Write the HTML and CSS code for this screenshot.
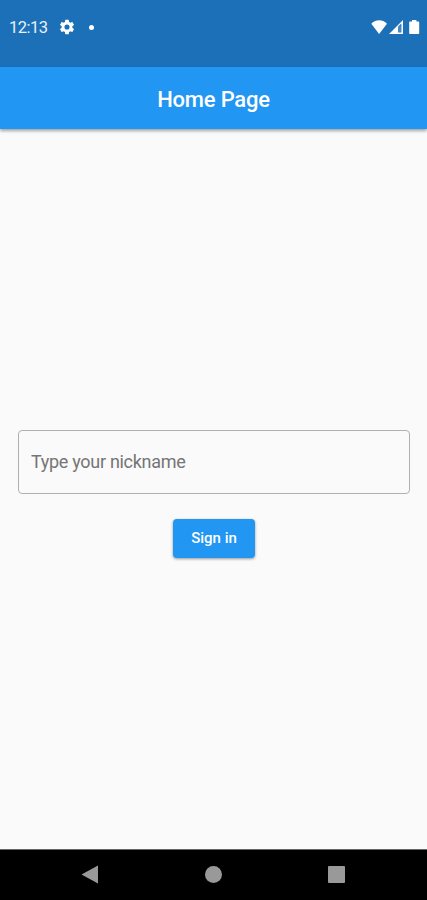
FILE: index.html
```html
<!DOCTYPE html>
<html lang="en">
<head>
    <meta charset="UTF-8">
    <meta name="viewport" content="width=device-width, initial-scale=1.0">
    <title>Home Page</title>
    <link rel="stylesheet" href="styles.css">
</head>
<body>
    <div class="status-bar">
        <span class="time">12:13</span>
        <svg class="gear" width="18" height="18" viewBox="0 0 24 24"><path fill="#fff" d="M19.14 12.94c.04-.3.06-.61.06-.94 0-.32-.02-.64-.07-.94l2.03-1.58a.49.49 0 0 0 .12-.61l-1.92-3.32a.49.49 0 0 0-.59-.22l-2.39.96c-.5-.38-1.03-.7-1.62-.94l-.36-2.54a.48.48 0 0 0-.48-.41h-3.84c-.24 0-.43.17-.47.41l-.36 2.54c-.59.24-1.13.57-1.62.94l-2.39-.96a.49.49 0 0 0-.59.22L2.74 8.87c-.12.21-.08.47.12.61l2.03 1.58c-.05.3-.09.63-.09.94s.02.64.07.94l-2.03 1.58a.49.49 0 0 0-.12.61l1.92 3.32c.12.22.37.29.59.22l2.39-.96c.5.38 1.03.7 1.62.94l.36 2.54c.05.24.24.41.48.41h3.84c.24 0 .44-.17.47-.41l.36-2.54c.59-.24 1.13-.56 1.62-.94l2.39.96c.22.08.47 0 .59-.22l1.92-3.32a.49.49 0 0 0-.12-.61l-2.01-1.58zM12 15.4A3.4 3.4 0 1 1 12 8.600a3.4 3.4 0 0 1 0 6.800z"/></svg>
        <span class="dot"></span>
        <svg class="signals" width="50" height="16" viewBox="0 0 50 16">
            <path fill="#fff" d="M1.300 4.700C5.700.1 12.600.1 17 4.700L9.100 15z"/>
            <path fill="#fff" fill-rule="evenodd" d="M19 15L33 1v14zM28.200 7.600v5.900h3.200V4.400z"/>
            <path fill="#fff" d="M29.500 7h1v6.500h-1z" opacity=".35"/>
            <path fill="#fff" d="M40.200 2.400h1.800V1h4.400v1.400h1.800c.6 0 1 .4 1 1V14c0 .6-.4 1-1 1h-8c-.6 0-1-.4-1-1V3.400c0-.6.4-1 1-1z"/>
        </svg>
    </div>

    <div class="header">
        <h1 class="title">Home Page</h1>
    </div>

    <div class="container">
        <input type="text" class="nickname-input" placeholder="Type your nickname">
        <button class="signin-button">Sign in</button>
    </div>

    <div class="nav-bar">
        <svg width="18" height="19" viewBox="0 0 18 19"><path fill="#999" d="M.5 9.500L17 .5v18z"/></svg>
        <span class="nav-home"></span>
        <span class="nav-recent"></span>
    </div>
</body>
</html>
```

FILE: styles.css
```css
* {
    margin: 0;
    padding: 0;
    box-sizing: border-box;
    font-family: Roboto, sans-serif;
}

body {
    display: flex;
    flex-direction: column;
    height: 100vh;
    background-color: #fafafa;
    overflow: hidden;
}

.status-bar {
    display: flex;
    align-items: center;
    height: 67px;
    padding: 0 7px 13px 9px;
    background-color: #1b70b7;
    color: #e8f1f8;
}

.time {
    width: 49px;
    font-size: 16.500px;
    letter-spacing: -0.5px;
    line-height: 20px;
    padding-top: 2px;
}

.dot {
    width: 5px;
    height: 5px;
    margin-left: 13px;
    border-radius: 50%;
    background-color: #fff;
}

.signals {
    margin-left: auto;
}

.header {
    display: flex;
    align-items: center;
    justify-content: center;
    height: 62px;
    background-color: #2196f3;
    color: #fff;
    box-shadow: 0 2px 3px rgba(0, 0, 0, 0.35);
}

.title {
    font-size: 22px;
    font-weight: 500;
    letter-spacing: -0.2px;
    padding-top: 2px;
}

.container {
    flex: 1;
    display: flex;
    flex-direction: column;
    align-items: center;
    justify-content: center;
    gap: 25px;
    padding: 9px 17px 0 18px;
}

.nickname-input {
    width: 100%;
    height: 64px;
    padding: 0 12px 1px;
    border: 1px solid #b0b0b0;
    border-radius: 4px;
    background-color: transparent;
    font-size: 18px;
    letter-spacing: -0.3px;
    outline: none;
}

.nickname-input::placeholder {
    color: #757575;
}

.signin-button {
    width: 82px;
    height: 39px;
    border: none;
    border-radius: 4px;
    background-color: #2196f3;
    color: #fff;
    font-size: 15px;
    font-weight: 500;
    box-shadow: 0 1px 3px rgba(0, 0, 0, 0.4);
}

.nav-bar {
    display: flex;
    align-items: center;
    justify-content: space-between;
    height: 51px;
    padding: 0 82px 2px 81px;
    border-top: 1px solid #666;
    background-color: #000;
}

.nav-home {
    width: 17px;
    height: 17px;
    border-radius: 50%;
    background-color: #999;
}

.nav-recent {
    width: 17px;
    height: 17px;
    border-radius: 1px;
    background-color: #999;
}
```
